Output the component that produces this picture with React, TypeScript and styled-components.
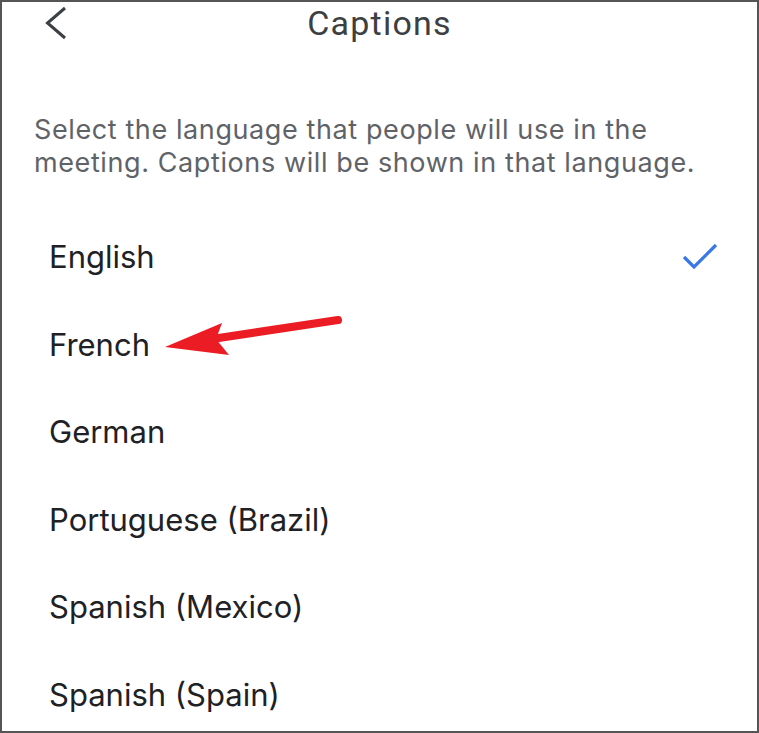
import styled, { createGlobalStyle } from "styled-components";

const GlobalStyle = createGlobalStyle`
	body {
		margin: 0;
		background: #ffffff;
	}
	* {
		box-sizing: border-box;
	}
`;

const Frame = styled.div`
	position: relative;
	width: 759px;
	height: 733px;
	border: 2px solid #555555;
	background: #ffffff;
	overflow: hidden;
	font-family: Inter, "Liberation Sans", sans-serif;
`;

const Header = styled.header`
	position: relative;
	height: 42px;
	display: flex;
	align-items: center;
	justify-content: center;
`;

const BackButton = styled.button`
	position: absolute;
	left: 40px;
	top: 50%;
	transform: translateY(-50%);
	width: 28px;
	height: 36px;
	padding: 0;
	border: none;
	background: transparent;
	display: flex;
	align-items: center;
	justify-content: center;
`;

const Title = styled.h1`
	margin: 0;
	font-family: Roboto, "Open Sans", sans-serif;
	font-weight: 400;
	font-size: 34px;
	color: #3c4043;
	letter-spacing: 1.2px;
`;

const Description = styled.p`
	margin: 69px 0 0;
	padding: 0 20px 0 32px;
	font-size: 27px;
	line-height: 33px;
	letter-spacing: 0.6px;
	color: #5f6368;
`;

const LanguageList = styled.ul`
	list-style: none;
	margin: 34px 0 0;
	padding: 0;
`;

const LanguageRow = styled.li`
	height: 87.5px;
	display: flex;
	align-items: center;
	justify-content: space-between;
	padding: 0 38px 0 47px;
	font-size: 31px;
	color: #202124;
`;

const Arrow = styled.svg`
	position: absolute;
	left: 0;
	top: 0;
	pointer-events: none;
`;

const languages = [
	"English",
	"French",
	"German",
	"Portuguese (Brazil)",
	"Spanish (Mexico)",
	"Spanish (Spain)",
];

function Check() {
	return (
		<svg width="38" height="30" viewBox="0 0 38 30">
			<path
				d="M3 15 L13 25 L35 3"
				fill="none"
				stroke="#3b78e7"
				strokeWidth="3.2"
			/>
		</svg>
	);
}

export default function App() {
	return (
		<>
			<GlobalStyle />
			<Frame>
				<Header>
					<BackButton aria-label="Back">
						<svg width="24" height="34" viewBox="0 0 24 34">
							<path
								d="M21 2 L3.5 17 L21 32"
								fill="none"
								stroke="#3c4043"
								strokeWidth="3"
							/>
						</svg>
					</BackButton>
					<Title>Captions</Title>
				</Header>
				<Description>
					Select the language that people will use in the meeting. Captions
					will be shown in that language.
				</Description>
				<LanguageList>
					{languages.map((lang, i) => (
						<LanguageRow key={lang}>
							<span>{lang}</span>
							{i === 0 && <Check />}
						</LanguageRow>
					))}
				</LanguageList>
				<Arrow width="759" height="733" viewBox="0 0 759 733">
					<line
						x1="336"
						y1="318"
						x2="210"
						y2="337"
						stroke="#ec1c24"
						strokeWidth="8"
						strokeLinecap="round"
					/>
					<path d="M163 345 L220 321 L214 337 L227 353 Z" fill="#ec1c24" />
				</Arrow>
			</Frame>
		</>
	);
}
